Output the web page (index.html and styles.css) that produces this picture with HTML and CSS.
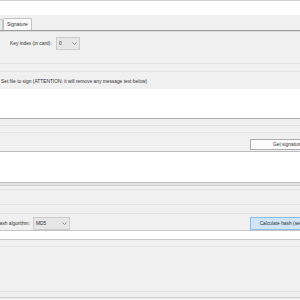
FILE: index.html
```html
<!DOCTYPE html>
<html lang="en">
<head>
  <meta charset="UTF-8">
  <title>Signature</title>
  <link rel="stylesheet" href="styles.css">
</head>
<body>
<div id="win">
  <div class="title"></div>

  <div class="tabs">
    <span class="tab off">Hash</span>
    <span class="tab on">Signature</span>
  </div>

  <div class="page">
    <div class="keyrow">
      <span class="lbl key">Key index (in card):</span>
      <div class="combo small">0
        <svg class="chev" width="5" height="3" viewBox="0 0 5 3"><path d="M0.5 0.5 L2.5 2.5 L4.5 0.5" fill="none" stroke="#666" stroke-width="0.7"/></svg>
      </div>
    </div>
    <div class="stripe"></div>

    <div class="hint">Set file to sign (ATTENTION: it will remove any message text below)</div>
    <div class="box msg"></div>
    <div class="sep"></div>

    <div class="btnrow">
      <button class="btn">Get signature</button>
    </div>

    <div class="box sig"></div>
    <div class="dbl"></div>

    <div class="sep2"><div class="inner"></div></div>

    <div class="hashrow">
      <div class="lblbox"><span class="lbl">Hash algorithm:</span></div>
      <div class="combo wide">MD5
        <svg class="chev" width="5" height="3" viewBox="0 0 5 3"><path d="M0.5 0.5 L2.5 2.5 L4.5 0.5" fill="none" stroke="#666" stroke-width="0.7"/></svg>
      </div>
      <button class="btn blue">Calculate hash (selection)</button>
    </div>

    <div class="box hash"></div>
    <div class="bottom"><div class="band"></div></div>
    <div class="foot"></div>
  </div>
</div>
</body>
</html>
```

FILE: styles.css
```css
* { box-sizing: border-box; }
html, body { margin: 0; overflow: hidden; }
body {
  width: 300px;
  height: 300px;
  background: #f0f0f0;
  font-family: 'Liberation Sans', Arial, sans-serif;
  font-size: 4.85px;
  color: #333;
}
#win {
  width: 330px;
  background: #f0f0f0;
}
.title {
  height: 15px;
  background: #fff;
  border-top: 1px solid #cfcfcf;
}
.tabs {
  height: 16px;
  display: flex;
  align-items: flex-end;
  border-bottom: 1px solid #9c9c9c;
  background: #f0f0f0;
}
.tab {
  height: 12px;
  line-height: 11px;
  padding: 0 3px;
  border: 1px solid #c4c4c4;
  border-bottom: none;
  border-radius: 2px 2px 0 0;
}
.tab.off {
  margin-left: -20px;
  width: 23px;
  height: 11px;
  text-align: right;
  background: #ececec;
}
.tab.on { background: #f9f9f9; }

.page { border-top: 1px solid #dcdcdc; }
.keyrow {
  height: 32px;
  display: flex;
  align-items: flex-start;
  padding: 5px 0 0 10px;
  border-bottom: 1px solid #e0e0e0;
}
.lbl { line-height: 13px; white-space: nowrap; }
.key { width: 46px; }
.combo {
  height: 13px;
  line-height: 11px;
  padding: 0 2px;
  display: flex;
  align-items: center;
  justify-content: space-between;
  background: #e6e6e6;
  border: 1px solid #cdcdcd;
}
.combo.small { width: 24px; }
.combo.wide { width: 37px; }
.chev { display: block; }
.stripe {
  height: 8px;
  border-bottom: 1px solid #e2e2e2;
}
.hint {
  height: 17px;
  padding: 6px 0 0 1px;
  line-height: 8px;
  white-space: nowrap;
}
.box { background: #fff; }
.box.msg { height: 30px; border-bottom: 1px solid #a9a9a9; }
.sep {
  height: 8px;
  margin: 6px 0;
  border-top: 1px solid #e3e3e3;
  border-bottom: 1px solid #e3e3e3;
}
.btnrow {
  height: 11px;
  display: flex;
  justify-content: flex-end;
  padding-right: 5px;
}
.btn {
  width: 75px;
  height: 11px;
  padding: 0;
  font: inherit;
  color: #333;
  line-height: 9px;
  background: #fbfbfb;
  border: 1px solid #adadad;
  white-space: nowrap;
}
.btn.blue {
  height: 13px;
  margin-left: auto;
  margin-right: 5px;
  background: #cfe5f6;
  border-color: #8cbde8;
}
.box.sig { height: 31px; border-top: 1px solid #bcbcbc; margin-top: 1px; }
.dbl {
  height: 4px;
  background: #e4e4e4;
  border-top: 1px solid #bdbdbd;
  border-bottom: 1px solid #d2d2d2;
}
.sep2 {
  height: 25px;
  margin-top: 3px;
  border-top: 1px solid #e2e2e2;
  border-bottom: 1px solid #e2e2e2;
}
.sep2 .inner {
  height: 15px;
  border-bottom: 1px solid #e2e2e2;
}
.hashrow {
  height: 16px;
  display: flex;
  align-items: flex-start;
  padding-top: 3px;
}
.lblbox {
  width: 33px;
  padding-right: 3px;
  display: flex;
  justify-content: flex-end;
  overflow: hidden;
}
.box.hash {
  height: 10px;
  border-top: 1px solid #c4c4c4;
  border-bottom: 1px solid #c8c8c8;
}
.bottom { height: 51px; }
.bottom .band {
  height: 7px;
  border-bottom: 1px solid #e6e6e6;
}
.foot {
  height: 7px;
  border-top: 1px solid #e0e0e0;
  border-bottom: 1px solid #cfcfcf;
}
```
